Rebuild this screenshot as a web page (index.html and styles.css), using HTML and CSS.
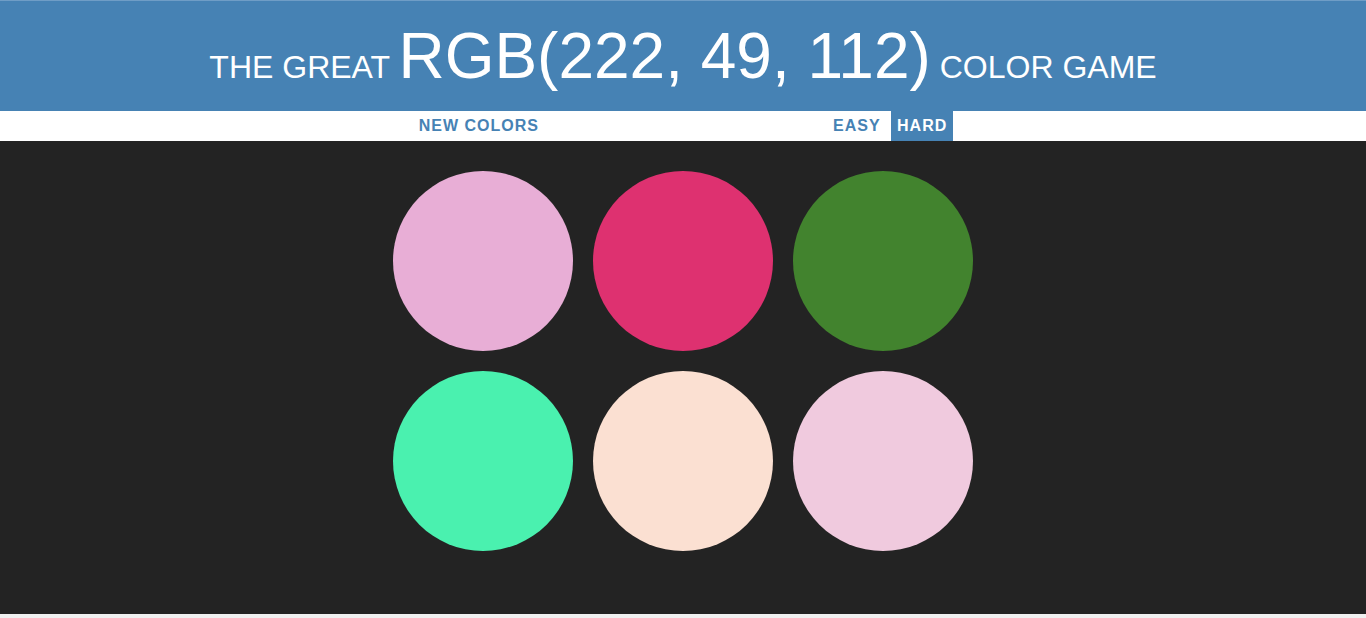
FILE: index.html
```html
<!DOCTYPE html>
<html lang="en">
<head>
<meta charset="utf-8">
<title>Color Game</title>
<link rel="stylesheet" href="styles.css">
</head>
<body>
<h1 class="title">The Great <span class="color-display">RGB(222, 49, 112)</span> Color Game</h1>
<div class="stripe">
  <button class="btn">New Colors</button>
  <span class="message"></span>
  <button class="btn">Easy</button>
  <button class="btn selected">Hard</button>
</div>
<main class="board">
  <div class="grid">
    <div class="square" style="background: rgb(232, 174, 214)"></div>
    <div class="square" style="background: rgb(222, 49, 112)"></div>
    <div class="square" style="background: rgb(66, 131, 46)"></div>
    <div class="square" style="background: rgb(74, 241, 175)"></div>
    <div class="square" style="background: rgb(251, 224, 210)"></div>
    <div class="square" style="background: rgb(240, 202, 222)"></div>
  </div>
</main>
</body>
</html>
```
FILE: styles.css
```css
* { box-sizing: border-box; }
html, body {
  margin: 0;
  padding: 0;
}
body {
  background: #f0f0f0;
  font-family: "Liberation Sans", Arial, sans-serif;
  font-size: 16px;
}
.title {
  margin: 0;
  height: 111px;
  padding: 20px 0;
  border-top: 1px solid #6f9dc6;
  background: #4682b4;
  color: #fff;
  font-weight: normal;
  font-size: 32px;
  line-height: 1.1;
  text-align: center;
  text-transform: uppercase;
  white-space: nowrap;
}
.color-display {
  font-size: 200%;
}
.stripe {
  height: 30px;
  background: #fff;
  text-align: center;
  white-space: nowrap;
}
.btn {
  height: 100%;
  margin: 0;
  padding: 0 6px;
  border: none;
  background: none;
  color: #4682b4;
  font-family: inherit;
  font-size: inherit;
  font-weight: 700;
  letter-spacing: 1px;
  text-transform: uppercase;
  vertical-align: top;
  cursor: pointer;
}
.btn.selected {
  background: #4682b4;
  color: #fff;
}
.message {
  display: inline-block;
  width: 20%;
}
.board {
  display: block;
  height: 473px;
  padding-top: 20px;
  background: #232323;
}
.grid {
  width: 600px;
  margin: 0 auto;
  padding: 10px;
  display: grid;
  grid-template-columns: repeat(3, 180px);
  gap: 20px;
}
.square {
  width: 180px;
  height: 180px;
  border-radius: 50%;
}
```
